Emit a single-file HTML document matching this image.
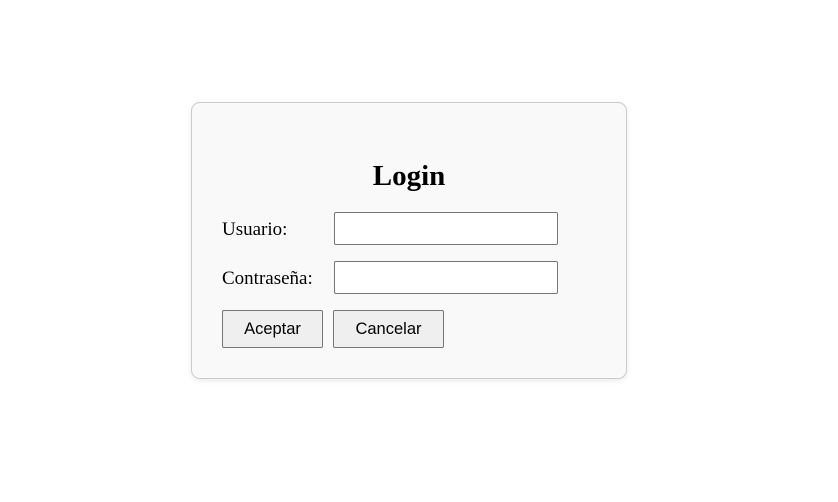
<!DOCTYPE html>
<html><head><style>
body{margin:0;width:838px;height:502px;background:#fff;position:relative;font-family:"Liberation Serif",serif;}
.card{position:absolute;left:191px;top:102px;width:434px;height:275px;background:#f9f9f9;border:1px solid #ccc;border-radius:9px;box-shadow:0 2px 6px rgba(0,0,0,0.08);}
h2{position:absolute;left:191px;width:436px;top:156px;margin:0;text-align:center;font-size:29px;font-weight:bold;line-height:40px;}
.lbl{position:absolute;left:222px;font-size:19px;line-height:22px;}
.in{position:absolute;left:334px;width:222px;height:31px;background:#fff;border:1px solid #767676;border-radius:2px;}
.btn{position:absolute;top:310px;height:36px;background:#efefef;border:1px solid #767676;border-radius:2px;font-family:"Liberation Sans",sans-serif;font-size:16.5px;line-height:36px;text-align:center;}
</style></head><body>
<div class="card"></div>
<h2>Login</h2>
<div class="lbl" style="top:219px">Usuario:</div>
<div class="in" style="top:212px"></div>
<div class="lbl" style="top:268px">Contraseña:</div>
<div class="in" style="top:261px"></div>
<div class="btn" style="left:222px;width:99px">Aceptar</div>
<div class="btn" style="left:333px;width:109px">Cancelar</div>
</body></html>
